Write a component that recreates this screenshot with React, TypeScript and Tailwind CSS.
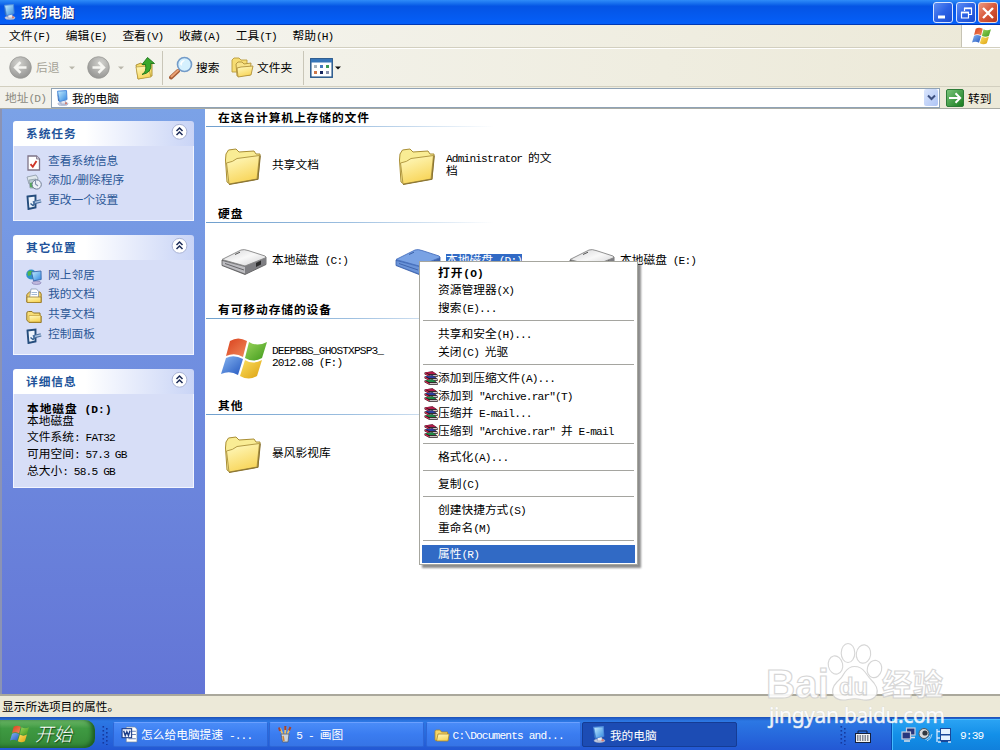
import React from "react";

/* Text in which Latin runs take half the advance of a Han character. */
function T({ children, bold = false }: { children: string; bold?: boolean }) {
  const runs = children.match(/[\x20-\x7e“”]+|[^\x20-\x7e“”]+/g) || [];
  return (
    <span className={bold ? "font-bold tracking-[0.94px] whitespace-pre" : "whitespace-pre"}>
      {runs.map((r, i) =>
        /^[\x20-\x7e“”]/.test(r) ? (
          <span
            key={i}
            className={
              bold
                ? "font-['Liberation_Mono',monospace] text-[11.2px] leading-none tracking-[0.1px]"
                : "font-['Liberation_Mono',monospace] text-[11.2px] leading-none tracking-[-0.86px]"
            }
          >
            {r}
          </span>
        ) : (
          <span key={i}>{r}</span>
        )
      )}
    </span>
  );
}

function Defs() {
  return (
    <svg className="absolute" width="0" height="0">
      <defs>
        <linearGradient id="fold" x1="0" y1="0" x2="0.4" y2="1">
          <stop offset="0" stopColor="#fffbc4" />
          <stop offset="1" stopColor="#f8d65c" />
        </linearGradient>
        <linearGradient id="screen" x1="0" y1="0" x2="1" y2="1">
          <stop offset="0" stopColor="#c8f0ff" />
          <stop offset="1" stopColor="#2f86e0" />
        </linearGradient>
        <linearGradient id="wr" x1="0" y1="0" x2="1" y2="1">
          <stop offset="0" stopColor="#d9401c" />
          <stop offset="1" stopColor="#f08a5c" />
        </linearGradient>
        <linearGradient id="wg" x1="0" y1="0" x2="1" y2="1">
          <stop offset="0" stopColor="#9ad45a" />
          <stop offset="1" stopColor="#3f9a1c" />
        </linearGradient>
        <linearGradient id="wb" x1="0" y1="0" x2="1" y2="1">
          <stop offset="0" stopColor="#86b4f0" />
          <stop offset="1" stopColor="#2458c0" />
        </linearGradient>
        <linearGradient id="wy" x1="0" y1="0" x2="1" y2="1">
          <stop offset="0" stopColor="#fce060" />
          <stop offset="1" stopColor="#dca010" />
        </linearGradient>
        <radialGradient id="gray" cx="0.4" cy="0.3" r="0.8">
          <stop offset="0" stopColor="#d2d2ce" />
          <stop offset="1" stopColor="#8e8e8c" />
        </radialGradient>
        <linearGradient id="go" x1="0" y1="0" x2="1" y2="1">
          <stop offset="0" stopColor="#7cc67c" />
          <stop offset="1" stopColor="#157a1c" />
        </linearGradient>
        <linearGradient id="driveTop" x1="0" y1="0" x2="1" y2="1">
          <stop offset="0" stopColor="#d2d2d4" />
          <stop offset="0.5" stopColor="#f8f8f8" />
          <stop offset="1" stopColor="#cfcfd1" />
        </linearGradient>
      </defs>
    </svg>
  );
}

function Flag({ w, h }: { w: number; h: number }) {
  return (
    <svg width={w} height={h} viewBox="0 0 46 43" className="shrink-0">
      <path d="M9 4 Q17 -1 26 4 L22 20 Q14 15 5 19Z" fill="url(#wr)" />
      <path d="M28 5 Q36 10 46 5 L41 21 Q33 26 24 21Z" fill="url(#wg)" />
      <path d="M5 21 Q13 17 22 22 L17 38 Q9 33 0 37Z" fill="url(#wb)" />
      <path d="M24 23 Q32 28 41 23 L36 39 Q28 44 19 39Z" fill="url(#wy)" />
    </svg>
  );
}

function Computer({ s = 16 }: { s?: number }) {
  return (
    <svg width={s} height={s} viewBox="0 0 16 16" className="shrink-0">
      <ellipse cx="8" cy="13.8" rx="5.2" ry="1.9" fill="#c2cbe0" stroke="#8895ba" strokeWidth=".4" />
      <path d="M6 10h4l1 4H6z" fill="#e6e8f0" stroke="#7d8bb0" strokeWidth=".5" />
      <path d="M2.5 1.2 11.5 .6 12 9.6 4.5 11.5z" fill="url(#screen)" stroke="#4e8cdc" strokeWidth="1" />
      <path d="M2 1.5 4.5 11.8 3 10.8z" fill="#3872bb" />
      <circle cx="11" cy="13.3" r="1.1" fill="#d87b6b" />
    </svg>
  );
}

function BigFolder() {
  return (
    <svg width="46" height="40" viewBox="0 0 46 40" className="shrink-0">
      <path d="M4.500 14 5 8 7.500 4 15 3 18 6 33 5 35 8 39 8 37 33 9 38 6 36Z" fill="#f9ec94" stroke="#a98e35" strokeWidth="1" />
      <path d="M5.500 17 Q12 16 16 12.500 L38.500 9.500 36 33 8 38Z" fill="url(#fold)" stroke="#b39a44" strokeWidth="1" />
      <path d="M39.300 9.500 36.800 33.300 8 38.500" fill="none" stroke="#8a7434" strokeWidth="1.200" />
    </svg>
  );
}

function Drive({ blue = false }: { blue?: boolean }) {
  return (
    <svg width="46" height="28" viewBox="0 0 46 28" className="shrink-0">
      <path d="M1 12 V17.500 L24 26.500 45 16.500 V9 L24 17Z" fill={blue ? "#4a73bd" : "#77777a"} stroke={blue ? "#345ba8" : "#555"} strokeWidth=".8" />
      <path d="M24 18 45 8.500 V16 L24 26Z" fill={blue ? "#3d63ac" : "#7e7e82"} />
      <path d="M1 11.500 20 2 Q23 1 27 2.500 L44 8 Q46 9 44 10 L24 18Z" fill={blue ? "#79a2e4" : "url(#driveTop)"} stroke={blue ? "#4a72be" : "#858585"} strokeWidth=".9" />
      <path d="M1.500 13 24 19 V25.500 L1.500 17Z" fill={blue ? "#6a93d8" : "#bcbcc0"} />
      <path d="M4 15.500 23 22" stroke={blue ? "#3f65ae" : "#66666a"} strokeWidth="1" />
      <path d="M14 6.500 19 4.200" stroke={blue ? "#3a60a8" : "#555"} strokeWidth="1" />
      <path d="M35 15 40 12.500 V16.500 L35 19Z" fill={blue ? "#27498c" : "#2d2d2d"} />
    </svg>
  );
}

function SmallFolder({ s = 17 }: { s?: number }) {
  return (
    <svg width={s} height={s} viewBox="0 0 16 16" className="shrink-0">
      <path d="M1 13V4.500Q1 3 2.500 3H6L7.500 5H13.500V13.500H2Z" fill="#f5d566" stroke="#a98728" strokeWidth=".8" />
      <path d="M4 7H15.200L14 14H2.500Z" fill="url(#fold)" stroke="#a98728" strokeWidth=".8" />
    </svg>
  );
}

function SideIcon({ kind }: { kind: string }) {
  return (
    <svg width="16" height="16" viewBox="0 0 16 16" className="shrink-0">
      {kind === "shared" && (
        <>
          <path d="M.8 12V5Q.8 3.500 2.500 3.500H6L7.500 5H14V7L15.200 8V14.500H3Z" fill="#f7dd76" stroke="#8f7427" strokeWidth="1" />
          <path d="M3 7.500H14.500V14H3Z" fill="url(#fold)" stroke="#c19f3c" strokeWidth=".7" />
        </>
      )}
      {kind === "info" && (
        <>
          <path d="M2 1H10.500L13.500 4V15H2Z" fill="#fff" stroke="#7f7488" strokeWidth="1.300" />
          <path d="M10.500 1V4H13.500" fill="#cfcbd8" stroke="#7f7488" strokeWidth=".8" />
          <path d="M4.500 9.200 6.800 11.800 10.500 6" fill="none" stroke="#cf3527" strokeWidth="1.900" />
        </>
      )}
      {kind === "add" && (
        <>
          <path d="M1 3 10 1 12 4 11 8 3 10Z" fill="#dfe7ec" stroke="#8a98a6" strokeWidth=".8" />
          <path d="M3 6 10 5V14L4 14Z" fill="#b7c9cf" stroke="#8796a2" strokeWidth=".7" />
          <path d="M4 9 8 8V14L4 13Z" fill="#57a85c" />
          <circle cx="10.700" cy="10.500" r="4.600" fill="#edf1f8" stroke="#6f7d96" strokeWidth="1" />
          <path d="M9.500 6.500V10L12 12" fill="none" stroke="#8391aa" strokeWidth="1.100" />
        </>
      )}
      {kind === "settings" && (
        <>
          <path d="M1.500 2.500 9.500 1.500V13.500L2.500 15Z" fill="#eef4fc" stroke="#254d7d" strokeWidth="1.900" />
          <path d="M4.500 9.500 7 11.500 9 9.500" fill="none" stroke="#34608f" strokeWidth="1.500" />
          <path d="M7 9 15 6.800" stroke="#4d73a2" strokeWidth="3.400" />
          <path d="M9 8.400 15 6.800" stroke="#b5cae6" strokeWidth="1.300" />
        </>
      )}
      {kind === "network" && (
        <>
          <ellipse cx="10.500" cy="13.800" rx="4.500" ry="1.700" fill="#c0b8dc" stroke="#7b76ad" strokeWidth=".6" />
          <circle cx="5.200" cy="5.500" r="5" fill="#2f92cc" />
          <path d="M1.500 3Q4 1 7 2L5 6 2 7Z" fill="#4fb64c" />
          <path d="M5.500 3 15 2 15.200 10.500 7.500 11.800Z" fill="url(#screen)" stroke="#3968ac" strokeWidth=".9" />
        </>
      )}
      {kind === "docs" && (
        <>
          <path d="M.8 14V6.500L3.500 4H14L15.200 6V14.500Z" fill="#f0cf66" stroke="#9b7b2c" strokeWidth="1" />
          <path d="M5 1H10.500L12.500 3.500V10H3.500Z" fill="#fff" stroke="#8797b0" strokeWidth=".8" />
          <path d="M5.500 4.500H11M5.500 6.500H11" stroke="#8ba8ce" strokeWidth=".8" />
          <path d="M1 9H15V14.500H1Z" fill="url(#fold)" stroke="#9b7b2c" strokeWidth=".8" />
        </>
      )}
    </svg>
  );
}

function Rar() {
  return (
    <svg width="14" height="14" viewBox="0 0 14 14" className="shrink-0">
      {[
        [0, "#b01c4a"],
        [4, "#2c3d9a"],
        [8, "#1f8a45"],
      ].map(([y, c]) => (
        <g key={y} transform={`translate(0 ${y})`}>
          <path d="M.5 1.500 8.500 .3 13.800 4 V5.800H5L.5 3.200Z" fill="#241318" />
          <path d="M1 1.200 8.500 .5 12.500 3.100H5Z" fill={c as string} />
          <path d="M5.500 4.400H13.400" stroke="#f4eef0" strokeWidth=".9" />
          <path d="M1 2.300 5 4.800" stroke="#d83058" strokeWidth="1.100" />
        </g>
      ))}
    </svg>
  );
}

function NavArrow({ flip = false }: { flip?: boolean }) {
  return (
    <svg width="23" height="23" viewBox="0 0 23 23" className={flip ? "shrink-0 -scale-x-100" : "shrink-0"}>
      <circle cx="11.500" cy="11.500" r="10.800" fill="url(#gray)" stroke="#999995" strokeWidth=".8" />
      <path d="M17.500 11.500H7M11.500 6.200 6.200 11.500 11.500 16.800" fill="none" stroke="#f6f6f2" strokeWidth="2.600" />
    </svg>
  );
}

function Caret({ c }: { c: string }) {
  return (
    <svg width="6" height="4" viewBox="0 0 6 4" className="shrink-0">
      <path d="M0 .5H6L3 3.500Z" fill={c} />
    </svg>
  );
}

function TitleButtons() {
  return (
    <div className="flex gap-[2.500px] pr-[2px]">
      <div className="flex h-[21px] w-[20px] items-center justify-center rounded-[3px] border border-[#d9e6ff] bg-linear-to-br from-[#5f8df2] via-[#2c62e6] to-[#1a4cd0]">
        <svg width="18" height="18"><path d="M4 13H11" stroke="#fff" strokeWidth="3" /></svg>
      </div>
      <div className="flex h-[21px] w-[20px] items-center justify-center rounded-[3px] border border-[#d9e6ff] bg-linear-to-br from-[#5f8df2] via-[#2c62e6] to-[#1a4cd0]">
        <svg width="18" height="18" fill="none" stroke="#fff">
          <path d="M7.500 7V4.500H14.500V10.500H12" strokeWidth="1.200" />
          <path d="M7 4.300H15" strokeWidth="1.800" />
          <path d="M4.500 8.500H11.500V14H4.500Z" strokeWidth="1.200" />
          <path d="M4 8.500H12" strokeWidth="1.800" />
        </svg>
      </div>
      <div className="flex h-[21px] w-[20px] items-center justify-center rounded-[3px] border border-[#f0dcd8] bg-linear-to-br from-[#ec9880] via-[#d8583a] to-[#b8381c]">
        <svg width="18" height="18"><path d="M4 4 14 14M14 4 4 14" stroke="#fff" strokeWidth="2.300" /></svg>
      </div>
    </div>
  );
}

function Panel({ title, height, children }: { title: string; height: string; children: React.ReactNode }) {
  return (
    <section className={`${height} flex w-[181px] flex-col`}>
      <header className="flex h-[25px] shrink-0 items-center justify-between rounded-t-[3px] bg-linear-to-r from-white from-40% to-[#c9d4f6] pr-[6px] pb-[2px] pl-[13px] text-[#21539a]">
        <T bold>{title}</T>
        <svg width="17" height="17" viewBox="0 0 17 17" className="-mt-[2px]">
          <circle cx="8.500" cy="8.800" r="7.400" fill="#fff" stroke="#a8b2d4" strokeWidth="1" />
          <path d="M5.500 8 8.500 5 11.500 8M5.500 12 8.500 9 11.500 12" fill="none" stroke="#1d2c58" strokeWidth="1.500" />
        </svg>
      </header>
      <div className="min-h-0 flex-1 border border-t-0 border-[#f2f5ff] bg-[#d7def7]">{children}</div>
    </section>
  );
}

function Links({ items }: { items: [string, string][] }) {
  return (
    <ul className="flex flex-col pt-[4px] pl-[12px] text-[#2b5796]">
      {items.map(([icon, label]) => (
        <li key={label} className="flex h-[19.600px] items-center gap-[6px]">
          <span className="pt-[6px]"><SideIcon kind={icon} /></span>
          <T>{label}</T>
        </li>
      ))}
    </ul>
  );
}

function Section({ title, children }: { title: string; children: React.ReactNode }) {
  return (
    <section className="flex h-[96px] flex-col">
      <h2 className="h-[17px] pl-[12px] leading-[16px]"><T bold>{title}</T></h2>
      <div className="h-px w-[288px] shrink-0 bg-linear-to-r from-[#6f9fcd] via-[#9dbfe0] to-white" />
      <div className="flex flex-1 items-center pl-[15px]">{children}</div>
    </section>
  );
}

function Item({ icon, lines, selected = false }: { icon: React.ReactNode; lines: string[]; selected?: boolean }) {
  return (
    <div className="flex w-[174px] shrink-0 items-center gap-[5px]">
      {icon}
      <div className="flex flex-col items-start pb-[4px]">
        {lines.map((l) => (
          <div
            key={l}
            className={selected ? "flex h-[12px] items-center bg-[#316ac5] leading-[12px] text-white" : "flex h-[12px] items-center leading-[12px]"}
          >
            <T>{l}</T>
          </div>
        ))}
      </div>
    </div>
  );
}

function Row({ label, rar = false, bold = false, active = false }: { label: string; rar?: boolean; bold?: boolean; active?: boolean }) {
  return (
    <div className={active ? "flex h-[17.600px] items-center bg-[#316ac5] text-white" : "flex h-[17.600px] items-center"}>
      <span className="flex w-[16px] shrink-0 pl-[2px]">{rar && <Rar />}</span>
      <T bold={bold}>{label}</T>
    </div>
  );
}

function Sep() {
  return (
    <div className="flex h-[8.800px] items-center px-[1px]">
      <div className="h-px w-full bg-[#a5a5a0]" />
    </div>
  );
}

function ContextMenu() {
  return (
    <div className="absolute top-[261px] left-[419px] h-[304px] w-[219px] border border-[#a6a69e] bg-white px-[2px] pt-[1.500px] shadow-[3px_3px_2px_rgba(0,0,0,0.45)]">
      <Row label="打开(O)" bold />
      <Row label="资源管理器(X)" />
      <Row label="搜索(E)..." />
      <Sep />
      <Row label="共享和安全(H)..." />
      <Row label="关闭(C) 光驱" />
      <Sep />
      <Row label="添加到压缩文件(A)..." rar />
      <Row label={'添加到 "Archive.rar"(T)'} rar />
      <Row label="压缩并 E-mail..." rar />
      <Row label={'压缩到 "Archive.rar" 并 E-mail'} rar />
      <Sep />
      <Row label="格式化(A)..." />
      <Sep />
      <Row label="复制(C)" />
      <Sep />
      <Row label="创建快捷方式(S)" />
      <Row label="重命名(M)" />
      <Sep />
      <Row label="属性(R)" active />
    </div>
  );
}

function Task({ icon, label, active = false }: { icon: React.ReactNode; label: string; active?: boolean }) {
  return (
    <div
      className={
        active
          ? "flex h-[25px] w-[155px] items-center gap-[2px] rounded-[2px] border border-[#153c94] bg-[#1c4cb4] pl-[8px]"
          : "flex h-[25px] w-[155px] items-center gap-[3px] rounded-[2px] border border-[#2e66d6] border-t-[#6ba0ff] bg-linear-to-b from-[#4a8cf8] via-[#3a7cf0] to-[#3674e6] pl-[7px]"
      }
    >
      {icon}
      <T>{label}</T>
    </div>
  );
}

function Grip() {
  return (
    <svg width="7" height="20" viewBox="0 0 7 20" className="shrink-0">
      {[1, 5, 9, 13, 17].map((y) => (
        <g key={y} fill="#15399e">
          <rect x="0.5" y={y} width="1.6" height="1.6" />
          <rect x="4" y={y + 2} width="1.6" height="1.6" />
        </g>
      ))}
    </svg>
  );
}

function Watermark() {
  return (
    <svg className="absolute top-[635px] left-[760px] opacity-90" width="200" height="100" viewBox="760 635 200 100">
      <g stroke="#d2d2d2" strokeWidth="1.100" fill="#ffffff">
        <text x="766" y="698" fontSize="40" fontWeight="700" fontFamily="Liberation Sans, sans-serif" textLength="63" lengthAdjust="spacingAndGlyphs">Bai</text>
        <ellipse cx="835.500" cy="665" rx="7.200" ry="9.200" transform="rotate(-12 835.5 665)" />
        <ellipse cx="848" cy="653" rx="6.800" ry="9.500" />
        <ellipse cx="863.500" cy="654" rx="7.200" ry="9.200" transform="rotate(8 863.5 654)" />
        <ellipse cx="874.500" cy="669" rx="7.200" ry="8.700" transform="rotate(14 874.5 669)" />
        <path d="M854.500 666.500 Q861 666.500 865 672 Q869 678 874 683 Q880 691 875 697 Q870 701.500 861 699.500 Q855 698 848 699.500 Q839 701.500 834 696.500 Q830 689 837 682 Q842 678 845 672 Q849 666.500 854.500 666.500Z" />
        <text x="839" y="695" fontSize="23" fontWeight="700" fontFamily="Liberation Sans, sans-serif" textLength="29" lengthAdjust="spacingAndGlyphs">du</text>
        <text x="882" y="695" fontSize="30" fontWeight="700" fontFamily="Noto Sans CJK SC, sans-serif" textLength="61">经验</text>
      </g>
      <text x="769" y="722.500" fontSize="21" fontWeight="400" fill="#fff" stroke="#d6d9dd" strokeWidth=".7" paintOrder="stroke" fontFamily="Noto Sans, sans-serif" textLength="176">jingyan.baidu.com</text>
    </svg>
  );
}

export default function App() {
  return (
    <div className="relative flex h-[750px] w-[1000px] flex-col overflow-hidden bg-white font-['Noto_Sans_CJK_SC',sans-serif] text-[11.720px] leading-[14px] text-black">
      <Defs />
      <div className="flex h-[25px] shrink-0 items-center justify-between bg-linear-to-b from-[#2f8cf8] via-[#0554e4] via-25% to-[#0560fa] pl-[2px] text-white shadow-[inset_0_-1px_0_#0038b4]">
        <div className="flex items-center gap-[3px] pb-[2px] [text-shadow:1px_1px_0_#0b2a80]">
          <Computer />
          <span className="text-[12.700px] font-bold tracking-[0.900px]">我的电脑</span>
        </div>
        <TitleButtons />
      </div>

      <div className="flex h-[23px] shrink-0 border-b border-[#d2cfbf] bg-linear-to-r from-[#f6f6f2] to-[#ece9d8]">
        <nav className="flex flex-1 items-center gap-[16px] pl-[9px]">
          {["文件(F)", "编辑(E)", "查看(V)", "收藏(A)", "工具(T)", "帮助(H)"].map((m) => (
            <span key={m} className="w-[40.700px]"><T>{m}</T></span>
          ))}
        </nav>
        <div className="flex w-[39px] items-center justify-center border-l border-[#c6c3b4] bg-white">
          <Flag w={19} h={18} />
        </div>
      </div>

      <div className="flex h-[39px] shrink-0 items-center border-t border-b border-t-white border-b-[#d2cfbf] bg-linear-to-r from-[#f5f5f0] to-[#ece9d8] pl-[9px]">
        <NavArrow />
        <span className="-mt-[2px] ml-[4px] w-[30px] text-[#a5a397]"><T>后退</T></span>
        <span className="ml-[3px] flex"><Caret c="#b9b7ab" /></span>
        <span className="ml-[12px] flex"><NavArrow flip /></span>
        <span className="ml-[8px] flex"><Caret c="#b9b7ab" /></span>
        <svg width="21" height="24" viewBox="0 0 21 24" className="ml-[11px] shrink-0">
          <path d="M1 9 6 7 8 9 17 7V20L3 23Z" fill="#f5dc6c" stroke="#a98c30" strokeWidth=".9" />
          <path d="M1 11 13 10 16 21 3 23Z" fill="url(#fold)" stroke="#b09336" strokeWidth=".7" />
          <path d="M7 18.500Q12 16 10.500 8.500H7L12.500 1.500 19.500 7.500H15.800Q17 17 7 18.500Z" fill="#38a82c" stroke="#1c7419" strokeWidth=".9" />
        </svg>
        <div className="ml-[6px] h-[34px] w-px shrink-0 bg-[#c9c6b8]" />
        <svg width="24" height="24" viewBox="0 0 24 24" className="ml-[6px] shrink-0">
          <path d="M2 21.500 9 15" stroke="#a45b34" strokeWidth="4" strokeLinecap="round" />
          <path d="M2.500 20.500 9 14.500" stroke="#eaa274" strokeWidth="2" strokeLinecap="round" />
          <circle cx="15.500" cy="8.500" r="7" fill="#d5f0fe" stroke="#739bc8" strokeWidth="1.600" />
          <path d="M11 8Q12 4 16 4Q13 6 12.500 10Z" fill="#fff" />
        </svg>
        <span className="-mt-[2px] ml-[3px] w-[24px]"><T>搜索</T></span>
        <svg width="23" height="21" viewBox="0 0 23 21" className="ml-[11px] shrink-0">
          <path d="M1 15V3L3 1H8L10 3H16V15Z" fill="#f6dc72" stroke="#b99a3b" strokeWidth=".9" />
          <path d="M6 19 5 7 7 5 11 5 13 7 20 6 19 18Z" fill="#f8e389" stroke="#b0913a" strokeWidth=".9" />
          <path d="M6 11 10 10 22 9 20 18 7 20Z" fill="url(#fold)" stroke="#b0913a" strokeWidth=".9" />
        </svg>
        <span className="-mt-[2px] ml-[3px] w-[36px]"><T>文件夹</T></span>
        <div className="ml-[10px] h-[34px] w-px shrink-0 bg-[#c9c6b8]" />
        <svg width="23" height="20" viewBox="0 0 23 20" className="ml-[6px] shrink-0">
          <rect x=".8" y=".8" width="21.400" height="18.400" fill="#fff" stroke="#28588c" strokeWidth="1.500" />
          <rect x="1" y="1" width="21" height="3.500" fill="#3675b8" />
          <rect x="4" y="7" width="3" height="3" fill="#a9b4bd" />
          <rect x="10" y="7" width="3" height="3" fill="#4479bd" />
          <rect x="16" y="7" width="3" height="3" fill="#3b9a55" />
          <rect x="4" y="13" width="3" height="3" fill="#d07747" />
          <rect x="10" y="13" width="3" height="3" fill="#18275f" />
          <rect x="16" y="13" width="3" height="3" fill="#8791ac" />
        </svg>
        <span className="ml-[2px] flex"><Caret c="#111111" /></span>
      </div>

      <div className="flex h-[22px] shrink-0 items-center border-b border-[#a9aba4] bg-linear-to-r from-[#f2f1ea] to-[#ece9d8]">
        <span className="w-[51px] pl-[5px] text-[#8a897f]"><T>地址(D)</T></span>
        <div className="flex h-[20px] w-[889px] items-center border border-[#8fa2b5] bg-white pl-[3px]">
          <Computer />
          <span className="ml-[1px] flex-1"><T>我的电脑</T></span>
          <div className="mr-[1px] flex h-[17px] w-[14px] items-center justify-center rounded-[2px] bg-linear-to-br from-[#dbe6fd] to-[#aec4f4]">
            <svg width="9" height="7"><path d="M1 1.500 4.500 5 8 1.500" fill="none" stroke="#3d5080" strokeWidth="2" /></svg>
          </div>
        </div>
        <svg width="18" height="18" viewBox="0 0 18 18" className="ml-[6px] shrink-0">
          <rect x=".5" y=".5" width="17" height="17" rx="1.500" fill="url(#go)" stroke="#2d7c38" />
          <path d="M3 9H14M9.500 4.300 14.200 9 9.500 13.700" fill="none" stroke="#fff" strokeWidth="2" />
        </svg>
        <span className="ml-[4px]"><T>转到</T></span>
      </div>

      <div className="flex h-[585px] shrink-0">
        <aside className="flex w-[205px] shrink-0 flex-col gap-[14px] border-l-2 border-[#8b93b4] bg-linear-to-b from-[#7ba2e7] to-[#6375d6] pt-[12px] pl-[11px]">
          <Panel title="系统任务" height="h-[100px]">
            <Links items={[["info", "查看系统信息"], ["add", "添加/删除程序"], ["settings", "更改一个设置"]]} />
          </Panel>
          <Panel title="其它位置" height="h-[120px]">
            <Links items={[["network", "网上邻居"], ["docs", "我的文档"], ["shared", "共享文档"], ["settings", "控制面板"]]} />
          </Panel>
          <Panel title="详细信息" height="h-[119px]">
            <div className="flex flex-col pt-[8px] pl-[13px] leading-[12px]">
              <span className="h-[12px]"><T bold>本地磁盘 (D:)</T></span>
              <span className="h-[16.300px]"><T>本地磁盘</T></span>
              <span className="h-[16.700px]"><T>文件系统: FAT32</T></span>
              <span className="h-[16.700px]"><T>可用空间: 57.3 GB</T></span>
              <span className="h-[16px]"><T>总大小: 58.5 GB</T></span>
            </div>
          </Panel>
        </aside>

        <main className="min-w-0 flex-1 pl-[1px]">
          <Section title="在这台计算机上存储的文件">
            <Item icon={<BigFolder />} lines={["共享文档"]} />
            <Item icon={<BigFolder />} lines={["Administrator 的文", "档"]} />
          </Section>
          <Section title="硬盘">
            <Item icon={<Drive />} lines={["本地磁盘 (C:)"]} />
            <Item icon={<Drive blue />} lines={["本地磁盘 (D:)"]} selected />
            <Item icon={<Drive />} lines={["本地磁盘 (E:)"]} />
          </Section>
          <Section title="有可移动存储的设备">
            <Item icon={<Flag w={46} h={43} />} lines={["DEEPBBS_GHOSTXPSP3_", "2012.08 (F:)"]} />
          </Section>
          <Section title="其他">
            <Item icon={<BigFolder />} lines={["暴风影视库"]} />
          </Section>
        </main>
      </div>

      <footer className="flex h-[23px] shrink-0 items-center border-t-2 border-[#aaa89c] bg-[#ece9d8] pb-[2px] pl-[2px]">
        <T>显示所选项目的属性。</T>
      </footer>

      <div className="flex h-[33px] shrink-0 items-end bg-linear-to-b from-[#1c50b8] via-[#2c78e4] via-12% to-[#2358d4] text-white">
        <div className="flex h-[28px] w-[95px] items-center gap-[6px] self-center rounded-r-[10px] bg-linear-to-b from-[#6cb868] via-[#3f9a42] via-30% to-[#348838] pl-[10px] shadow-[inset_-3px_-1px_4px_#1c5a22]">
          <Flag w={19} h={18} />
          <span className="pb-[2px] text-[18.500px] leading-[20px] font-light italic [text-shadow:1px_1px_1px_#17461a]">开始</span>
        </div>
        <span className="mb-[5px] ml-[7px] flex"><Grip /></span>
        <div className="mb-[3px] ml-[4px] flex gap-[1.300px]">
          <Task
            label="怎么给电脑提速 -..."
            icon={
              <svg width="17" height="17" viewBox="0 0 16 16" className="shrink-0">
                <path d="M5 1H13L15 3V15H5Z" fill="#fff" stroke="#789" strokeWidth=".6" />
                <path d="M10 5H14M10 8H14M7 12H14" stroke="#6884b8" strokeWidth="1" />
                <rect x="1" y="2.500" width="9" height="8.500" fill="#eef3ff" stroke="#1c3c86" />
                <path d="M2.500 4.500 4 9 5.500 5.500 7 9 8.500 4.500" fill="none" stroke="#1c3c86" strokeWidth="1.300" />
              </svg>
            }
          />
          <Task
            label="5 - 画图"
            icon={
              <svg width="16" height="17" viewBox="0 0 16 17" className="shrink-0">
                <path d="M6 9 3 2M8 9 8.500 1M10 9 13 2" stroke="#e6c06a" strokeWidth="1.800" />
                <path d="M3 5 2 1.500M8.300 4V0M12 4.500 13.500 1" stroke="#a8432f" strokeWidth="2" />
                <path d="M4 8H12L11 16H5.500Z" fill="#c9d3dd" stroke="#56606e" strokeWidth=".8" />
                <path d="M6 10 7 15" stroke="#d5852f" strokeWidth="1.500" />
              </svg>
            }
          />
          <Task label={"C:\\Documents and..."} icon={<SmallFolder s={16} />} />
          <Task label="我的电脑" active icon={<Computer s={17} />} />
        </div>
        <span className="mb-[5px] ml-[103px] flex"><Grip /></span>
        <svg width="16" height="13" viewBox="0 0 16 13" className="mb-[7px] ml-[8px] shrink-0">
          <path d="M3 3V1H12V3" fill="none" stroke="#14203c" />
          <rect x=".5" y="3.500" width="15" height="9" fill="#f2f2f2" stroke="#14203c" />
          <path d="M2 6H14M2 8H14M2 10H14" stroke="#14203c" strokeDasharray="1.500 1" strokeWidth="1.100" />
        </svg>
        <div className="ml-auto flex h-[31px] w-[109px] items-center border-l border-[#0a4cb0] bg-linear-to-b from-[#2ba4f4] via-[#1390e8] to-[#1080dc] pl-[9px] shadow-[inset_1px_1px_0_#45bcff]">
          <svg width="15" height="15" viewBox="0 0 15 15" className="shrink-0">
            <rect x="5.500" y="1" width="8.500" height="7" fill="#27367e" stroke="#c8cede" strokeWidth="1.200" />
            <rect x="1" y="5" width="8.500" height="7" fill="#27367e" stroke="#c8cede" strokeWidth="1.200" />
            <path d="M3 14H9M10 10.500H14" stroke="#dde1e8" strokeWidth="1.500" />
          </svg>
          <svg width="16" height="16" viewBox="0 0 16 16" className="ml-[2px] shrink-0">
            <circle cx="6" cy="6.500" r="5" fill="#d5d9dc" stroke="#4d555c" />
            <circle cx="7" cy="6" r="2.600" fill="#303840" />
            <path d="M9 14Q13.500 12 14 7M7.500 12.500Q11 12 12 8.500" fill="none" stroke="#b6dcf8" strokeWidth=".9" />
          </svg>
          <svg width="16" height="16" viewBox="0 0 16 16" className="ml-[2px] shrink-0">
            <path d="M4 1H15V15H4Z" fill="#1b4798" />
            <path d="M5 2H14V7H5ZM5 8.500H14V13H5Z" fill="#e7f2ff" />
            <path d="M1 2V15M1 4.500H4M1 11H4M2 15H5M12 15H15" stroke="#d2e7ff" strokeWidth="1.300" />
          </svg>
          <span className="ml-[8px]"><T>9:39</T></span>
        </div>
      </div>

      <ContextMenu />
      <Watermark />
    </div>
  );
}
